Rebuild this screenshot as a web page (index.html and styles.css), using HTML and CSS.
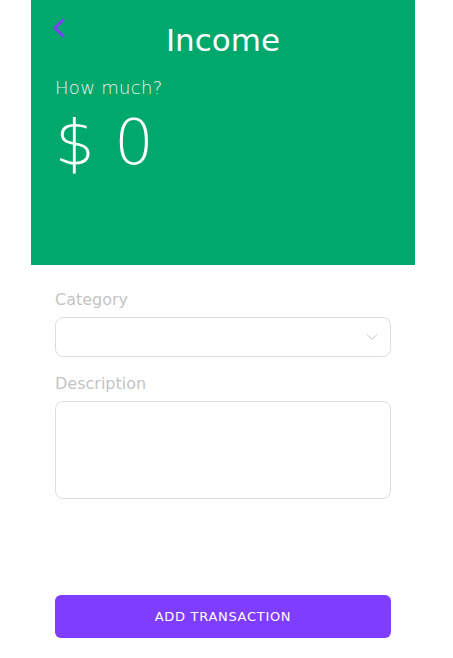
FILE: index.html
```html
<!DOCTYPE html>
<html lang="en">
<head>
<meta charset="utf-8">
<link rel="stylesheet" href="styles.css">
</head>
<body>
<div class="screen">
  <header class="hero">
    <div class="topbar">
      <button class="back" aria-label="Back">
        <svg width="14" height="20" viewBox="0 0 14 20"><path d="M11 2 L3 10 L11 18" fill="none" stroke="#7f3dff" stroke-width="3" stroke-linecap="round" stroke-linejoin="round"/></svg>
      </button>
      <h1 class="title">Income</h1>
    </div>
    <p class="ask">How much?</p>
    <p class="amount">$ 0</p>
  </header>
  <form class="form">
    <label class="label">Category</label>
    <div class="select">
      <svg class="caret" width="12" height="8" viewBox="0 0 12 8"><path d="M1 1.5 L6 6.5 L11 1.5" fill="none" stroke="#c4c4c4" stroke-width="1"/></svg>
    </div>
    <label class="label">Description</label>
    <div class="textarea"></div>
    <div class="spacer"></div>
    <button type="button" class="submit">ADD TRANSACTION</button>
  </form>
</div>
</body>
</html>
```
FILE: styles.css
```css
* { box-sizing: border-box; }
body {
  margin: 0;
  background: #fff;
  font-family: "DejaVu Sans", "Open Sans", sans-serif;
}
.screen {
  width: 384px;
  margin-left: 31px;
}
.hero {
  background: #00a86b;
  height: 265px;
  padding: 12px 24px 0 24px;
  color: #fff;
}
.topbar {
  position: relative;
  height: 48px;
  display: flex;
  justify-content: center;
  align-items: flex-start;
}
.back {
  position: absolute;
  left: -6px;
  top: 4px;
  background: none;
  border: 0;
  padding: 0;
  width: 20px;
  height: 24px;
  display: flex;
  align-items: center;
  justify-content: center;
}
.title {
  margin: 0;
  margin-top: 11px;
  font-size: 31px;
  font-weight: 400;
  line-height: 34px;
}
.ask {
  margin: 17px 0 0 0;
  font-size: 18px;
  line-height: 22px;
  letter-spacing: 0.3px;
  color: #f0f0f0;
  font-weight: 300;
}
.amount {
  margin: 8px 0 0 0;
  font-size: 62px;
  line-height: 72px;
  font-weight: 200;
}
.form {
  padding: 24px 24px 0 24px;
  display: flex;
  flex-direction: column;
}
.label {
  font-size: 16px;
  line-height: 22px;
  color: #c4c4c4;
  margin-bottom: 6px;
}
.select {
  height: 40px;
  border: 1px solid #dedede;
  border-radius: 8px;
  display: flex;
  align-items: center;
  justify-content: flex-end;
  padding-right: 12px;
  margin-bottom: 16px;
}
.textarea {
  height: 98px;
  border: 1px solid #dedede;
  border-radius: 8px;
}
.spacer { height: 96px; }
.submit {
  height: 43px;
  border: 0;
  border-radius: 6px;
  background: #7f3dff;
  color: #fff;
  font-family: inherit;
  font-size: 13px;
  letter-spacing: 0.7px;
}
```
